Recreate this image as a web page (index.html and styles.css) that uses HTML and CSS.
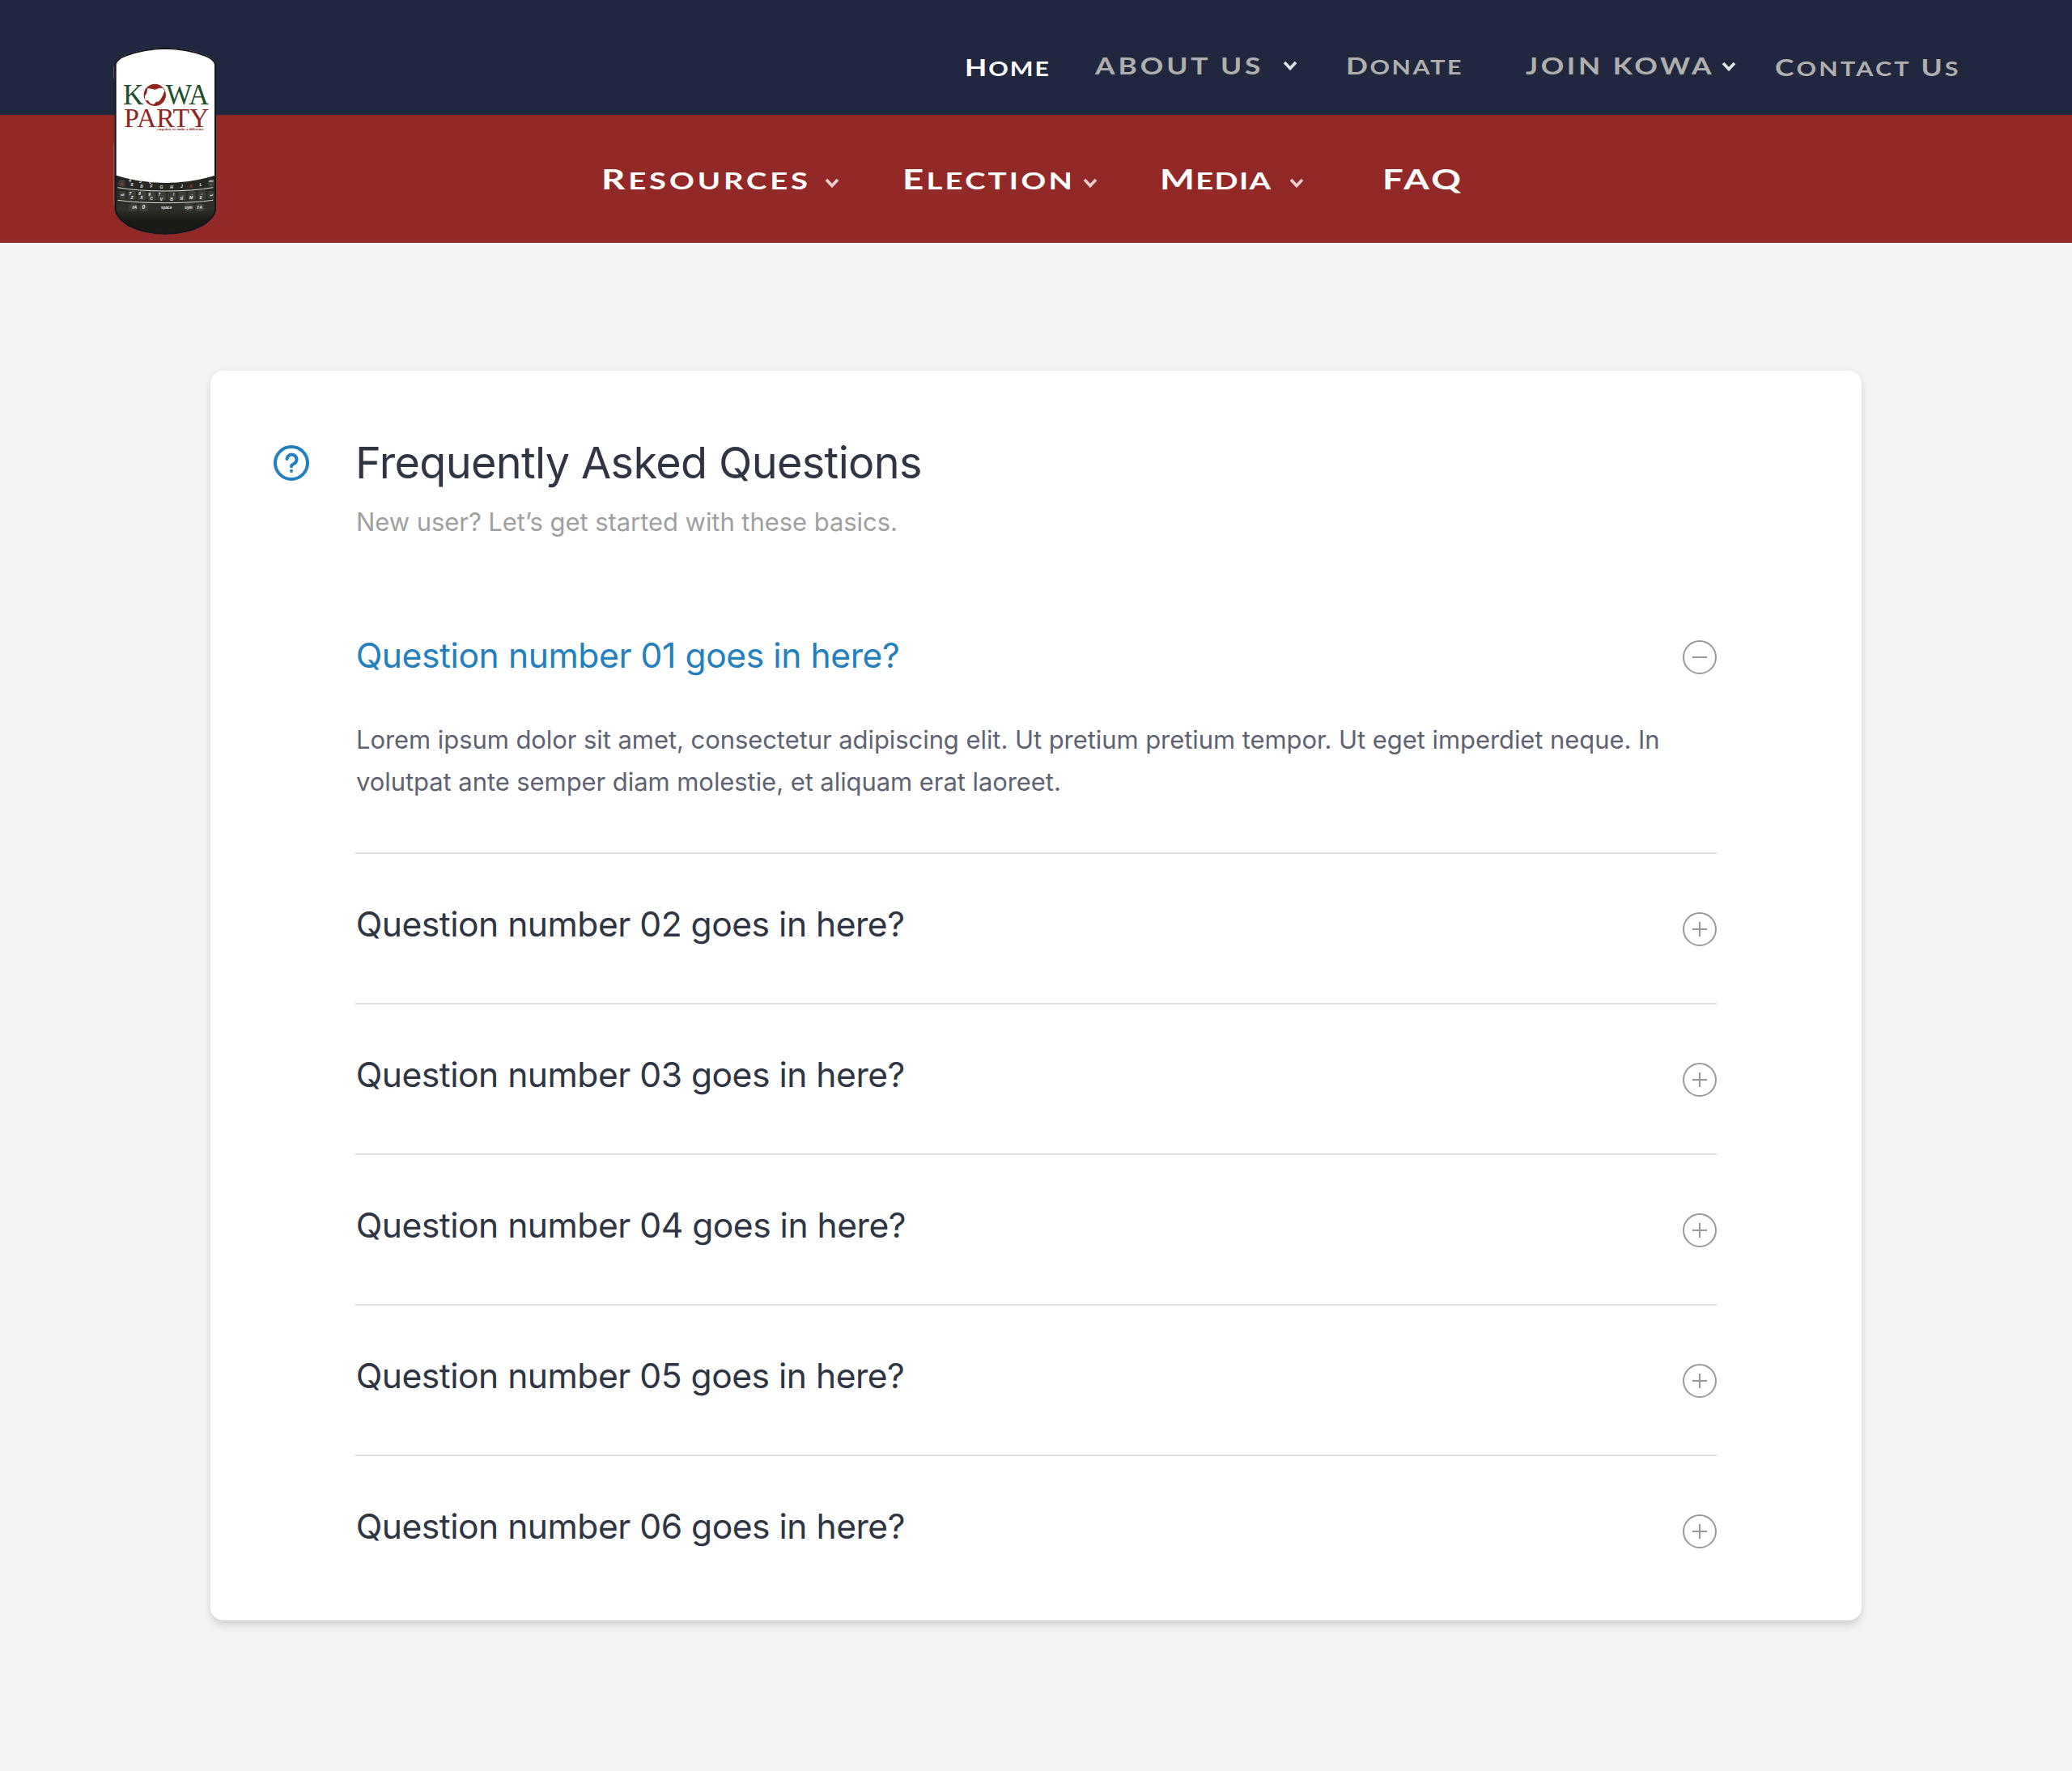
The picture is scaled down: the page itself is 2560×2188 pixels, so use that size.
FILE: index.html
```
<!DOCTYPE html>
<html lang="en">
<head>
<meta charset="utf-8">
<title>KOWA Party - FAQ</title>
<link rel="stylesheet" href="styles.css">
</head>
<body>
<svg class="sprite" aria-hidden="true">
  <symbol id="chevron" viewBox="0 0 18 12"><path d="M2 2l7 7.500L16 2" fill="none" stroke="currentColor" stroke-width="3.600"/></symbol>
  <symbol id="minus" viewBox="0 0 42 42"><circle cx="21" cy="21" r="20" fill="none" stroke="currentColor" stroke-width="2"/><path d="M12 21h18" stroke="currentColor" stroke-width="2"/></symbol>
  <symbol id="plus" viewBox="0 0 42 42"><circle cx="21" cy="21" r="20" fill="none" stroke="currentColor" stroke-width="2"/><path d="M12 21h18M21 12v18" stroke="currentColor" stroke-width="2"/></symbol>
</svg>
<header class="header">
  <nav class="bar bar-top">
    <a class="item home"><span class="label">H<span class="sc">ome</span></span></a>
    <a class="item about"><span class="label">About us</span><svg class="chev"><use href="#chevron"/></svg></a>
    <a class="item donate"><span class="label">D<span class="sc">onate</span></span></a>
    <a class="item join"><span class="label">Join Kowa</span><svg class="chev"><use href="#chevron"/></svg></a>
    <a class="item contact"><span class="label">C<span class="sc">ontact</span> U<span class="sc">s</span></span></a>
  </nav>
  <nav class="bar bar-main">
    <a class="item resources"><span class="label">R<span class="sc">esources</span></span><svg class="chev"><use href="#chevron"/></svg></a>
    <a class="item election"><span class="label">E<span class="sc">lection</span></span><svg class="chev"><use href="#chevron"/></svg></a>
    <a class="item media"><span class="label">M<span class="sc">edia</span></span><svg class="chev"><use href="#chevron"/></svg></a>
    <a class="item faq-link"><span class="label">FAQ</span></a>
  </nav>
  <svg class="logo" viewBox="0 0 510 810">
    <defs>
      <clipPath id="body"><path d="M66 118Q72 96 105 84Q170 58 253 57Q336 58 401 84Q434 96 440 118V660Q434 690 395 716Q335 747 253 748Q171 747 111 716Q72 690 66 660Z"/></clipPath>
      <linearGradient id="keys" x1="0" y1="0" x2="0" y2="1"><stop offset="0" stop-color="#24241f"/><stop offset=".55" stop-color="#30302b"/><stop offset=".75" stop-color="#181914"/><stop offset="1" stop-color="#1b1c17"/></linearGradient>
    </defs>
    <g clip-path="url(#body)">
      <rect x="60" y="50" width="390" height="700" fill="#fff"/>
      <path d="M60 527Q150 558 253 558Q356 558 446 527V760H60Z" fill="url(#keys)"/>
      <g fill="#3d3d38">
        <rect x="82" y="588" width="24" height="30" rx="9"/><rect x="114" y="586" width="30" height="34" rx="9"/><rect x="152" y="587" width="30" height="35" rx="9"/><rect x="188" y="588" width="30" height="35" rx="9"/><rect x="225" y="589" width="30" height="34" rx="9"/><rect x="263" y="589" width="30" height="34" rx="9"/><rect x="300" y="588" width="30" height="35" rx="9"/><rect x="337" y="587" width="30" height="35" rx="9"/><rect x="373" y="586" width="30" height="34" rx="9"/><rect x="410" y="588" width="24" height="30" rx="9"/>
        <rect x="117" y="634" width="32" height="30" rx="10"/><rect x="157" y="634" width="32" height="30" rx="10"/><rect x="324" y="634" width="32" height="30" rx="10"/><rect x="364" y="634" width="32" height="30" rx="10"/>
        <rect x="80" y="546" width="24" height="26" rx="9"/><rect x="410" y="546" width="24" height="26" rx="9"/>
      </g>
      <path d="M76 575Q150 588 253 588Q356 588 430 575M76 622Q150 632 253 632Q356 632 430 622" fill="none" stroke="#d8d8d4" stroke-width="3"/>
      <g class="key">
        <text x="92" y="566" fill="#b03030">A</text><text x="129" y="571">S</text><text x="165" y="575">D</text><text x="201" y="577">F</text><text x="238" y="578">G</text><text x="276" y="578">H</text><text x="313" y="577">J</text><text x="348" y="575" fill="#b03030">K</text><text x="384" y="571">L</text><text x="423" y="556" class="tiny">del</text><text x="423" y="567" class="tiny">←</text>
        <text x="122" y="554">4</text><text x="160" y="558">5</text><text x="196" y="562">6</text>
        <text x="94" y="606" class="tiny">alt</text><text x="123" y="602">7</text><text x="129" y="617">Z</text><text x="158" y="604">8</text><text x="165" y="619">X</text><text x="194" y="606">9</text><text x="201" y="621">C</text><text x="230" y="606">?</text><text x="238" y="623">V</text><text x="284" y="606">!</text><text x="276" y="623">B</text><text x="318" y="606">,</text><text x="313" y="622">N</text><text x="353" y="604">.</text><text x="348" y="619">M</text><text x="388" y="602" class="tiny">♫</text><text x="384" y="617">$</text><text x="422" y="608">↵</text>
        <text x="136" y="654">⇧A</text><text x="172" y="654" class="zero">0</text><text x="257" y="655" class="word">space</text><text x="339" y="654" class="word">sym</text><text x="378" y="654">⇧A</text>
      </g>
    </g>
    <path d="M68 118Q74 98 107 86Q171 60 253 59Q335 60 399 86Q432 98 438 118V660Q432 688 393 714Q334 745 253 746Q172 745 113 714Q74 688 68 660Z" fill="none" stroke="#14151a" stroke-width="6"/>
    <path d="M62 125v45M62 410v230" stroke="#777" stroke-width="2"/>
    <g class="brand">
      <text x="96" y="266" font-size="107" textLength="76" lengthAdjust="spacingAndGlyphs" fill="#1f4d2b">K</text>
      <text x="254" y="266" font-size="107" textLength="160" lengthAdjust="spacingAndGlyphs" fill="#1f4d2b">WA</text>
      <text x="100" y="350" font-size="101" textLength="315" lengthAdjust="spacingAndGlyphs" fill="#8f2622">PARTY</text>
      <text x="218" y="362" font-size="14" font-weight="700" textLength="178" lengthAdjust="spacingAndGlyphs" fill="#8f2622">...together, we make a difference</text>
    </g>
    <circle cx="214" cy="232" r="41" fill="#8f2622"/>
    <path d="M187 207l14 2 14 3 14-5 14-1 7 10-5 14-7 14-9 12-11 2-8 9-13-4-8-10-11-2-1-15 7-12z" fill="#fff"/>
  </svg>
</header>
<main class="page">
  <section class="card">
    <svg class="help" viewBox="0 0 44 44" fill="none" stroke="currentColor" stroke-width="4" stroke-linecap="round"><circle cx="22" cy="22" r="20"/><path d="M16.500 17a6 6 0 1 1 8.500 6q-3 1.300-3 3.300"/><path d="M22 31.800v.2"/></svg>
    <div class="content">
      <h1 class="title">Frequently Asked Questions</h1>
      <p class="subtitle">New user? Let’s get started with these basics.</p>
      <div class="list">
        <article class="entry open">
          <div class="row"><h2 class="question first">Question number 01 goes in here?</h2><svg class="toggle"><use href="#minus"/></svg></div>
          <p class="answer">Lorem ipsum dolor sit amet, consectetur adipiscing elit. Ut pretium pretium tempor. Ut eget imperdiet neque. In<br>volutpat ante semper diam molestie, et aliquam erat laoreet.</p>
        </article>
        <article class="entry"><div class="row"><h2 class="question">Question number 02 goes in here?</h2><svg class="toggle"><use href="#plus"/></svg></div></article>
        <article class="entry"><div class="row"><h2 class="question">Question number 03 goes in here?</h2><svg class="toggle"><use href="#plus"/></svg></div></article>
        <article class="entry"><div class="row"><h2 class="question">Question number 04 goes in here?</h2><svg class="toggle"><use href="#plus"/></svg></div></article>
        <article class="entry"><div class="row"><h2 class="question">Question number 05 goes in here?</h2><svg class="toggle"><use href="#plus"/></svg></div></article>
        <article class="entry"><div class="row"><h2 class="question">Question number 06 goes in here?</h2><svg class="toggle"><use href="#plus"/></svg></div></article>
      </div>
    </div>
  </section>
</main>
</body>
</html>
```
FILE: styles.css
```
* { box-sizing: border-box; }
body { margin: 0; min-height: 2188px; background: #f3f3f3; font-family: Inter, "Liberation Sans", sans-serif; }
h1, h2, p { margin: 0; font-weight: 400; }
.sprite { position: absolute; width: 0; height: 0; }

.header { position: relative; border-bottom: 2px solid #fff; }
.bar { display: flex; align-items: flex-start; font-family: Lato, sans-serif; font-weight: 700; text-transform: uppercase; white-space: nowrap; }
.bar-top { height: 142px; padding: 60.8px 0 0 1191.5px; background: #222740; color: #b0afaf; font-size: 29px; line-height: 40px; }
.bar-main { height: 158px; padding: 57.5px 0 0 742.5px; background: #932926; color: #fff; font-size: 35px; line-height: 40px; }
.item { display: flex; flex: none; }
.label { flex: none; display: block; transform-origin: 0 0; }
.bar-top .label { transform: scaleX(1.22); }
.bar-main .label { transform: scaleX(1.3); }
.sc { font-size: .86em; }
.bar-main .sc { font-size: .84em; }
.chev { width: 18px; height: 12px; color: #e3e4ea; }
.bar-main .chev { margin-top: 20.5px; color: #e9d0cf; }

.home { width: 161px; padding-top: 2px; color: #fff; }
.home .label { letter-spacing: 1.6px; }
.about { width: 310px; }
.about .label { width: 232.5px; letter-spacing: 3.2px; }
.about .chev { margin-top: 14px; }
.donate { width: 222.5px; }
.donate .label { letter-spacing: 2.1px; }
.join { width: 307.5px; }
.join .label { width: 242px; letter-spacing: 2.9px; }
.join .chev { margin-top: 15.5px; }
.contact { padding-top: 2px; }
.contact .label { letter-spacing: 2.6px; }
.resources { width: 372px; }
.resources .label { width: 276px; letter-spacing: 3px; }
.election { width: 318px; }
.election .label { width: 223px; letter-spacing: 2.5px; }
.media { width: 275.5px; }
.media .label { width: 160.5px; letter-spacing: 1px; }
.faq-link .label { letter-spacing: 2.5px; }

.logo { position: absolute; left: 120px; top: 40px; width: 170px; height: 270px; }
.brand { font-family: "Liberation Serif", serif; }
.key { font: italic 700 15px "Liberation Sans", sans-serif; fill: #eee; text-anchor: middle; }
.key .tiny { font-size: 11px; }
.key .word { font-size: 14px; font-style: normal; }
.key .zero { font-size: 20px; }

.page { padding: 156px 260px 186px; }
.card { display: flex; height: 1544px; padding: 82px 179px 0 78px; border-radius: 16px; background: #fff; box-shadow: 0 8px 12px -2px rgba(0, 0, 0, .1), 0 4px 8px -2px rgba(0, 0, 0, .06), 0 0 8px rgba(0, 0, 0, .05); }
.help { flex: none; width: 44px; height: 44px; margin: 10px 57px 0 0; color: #2480bd; }
.content { flex: 1; }
.title { color: #303543; font-size: 54px; line-height: 64px; letter-spacing: -.65px; }
.subtitle { margin-top: 16.7px; color: #a0a0a0; font-size: 31px; line-height: 48px; letter-spacing: -.06px; text-indent: 1px; }
.list { margin-top: 54.3px; }
.entry { height: 186px; padding-top: 55.5px; border-top: 2px solid #e0e0e0; }
.entry.open { height: 330px; border-top: 0; }
.row { display: flex; justify-content: space-between; }
.question { color: #303543; font-size: 42.6px; line-height: 64px; letter-spacing: -.5px; text-indent: .7px; }
.question.first { color: #2480bd; letter-spacing: -.42px; }
.toggle { width: 42px; height: 42px; margin-top: 16.5px; color: #999; }
.open .toggle { margin-top: 12.5px; }
.answer { margin-top: 46px; padding-left: 1px; color: #5f6371; font-size: 31px; line-height: 52px; letter-spacing: -.07px; white-space: nowrap; }
```
